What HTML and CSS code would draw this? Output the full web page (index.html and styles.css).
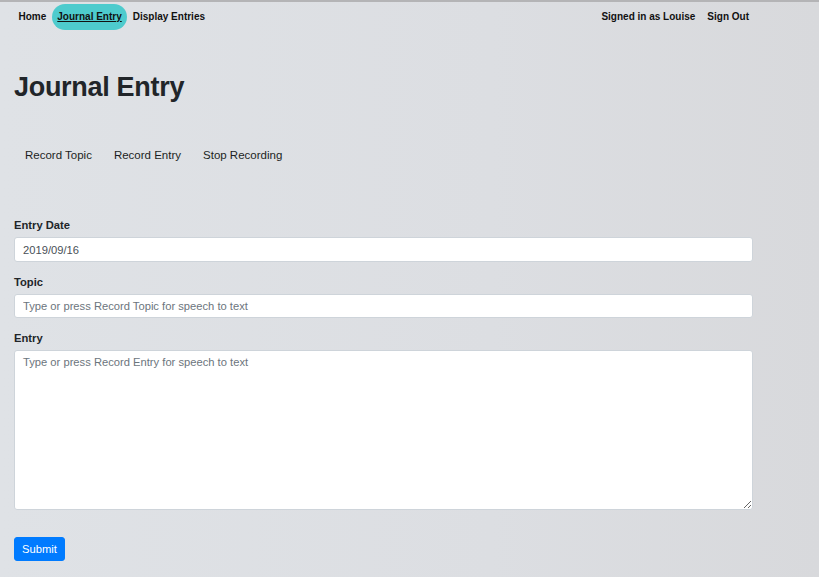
FILE: index.html
```html
<!DOCTYPE html>
<html lang="en">
<head>
<meta charset="utf-8">
<title>Journal Entry</title>
<link rel="stylesheet" href="styles.css">
</head>
<body>
<nav class="topnav">
  <div class="nav-left">
    <a class="nav-link" href="#">Home</a>
    <a class="nav-link active" href="#">Journal Entry</a>
    <a class="nav-link" href="#">Display Entries</a>
  </div>
  <div class="nav-right">
    <span class="nav-link">Signed in as Louise</span>
    <a class="nav-link" href="#">Sign Out</a>
  </div>
</nav>
<main class="page">
  <h1 class="title">Journal Entry</h1>
  <div class="record-row">
    <button class="rec-btn" type="button">Record Topic</button>
    <button class="rec-btn" type="button">Record Entry</button>
    <button class="rec-btn" type="button">Stop Recording</button>
  </div>
  <form class="entry-form">
    <div class="group">
      <label class="label" for="date">Entry Date</label>
      <input class="field" id="date" type="text" value="2019/09/16">
    </div>
    <div class="group">
      <label class="label" for="topic">Topic</label>
      <input class="field" id="topic" type="text" placeholder="Type or press Record Topic for speech to text">
    </div>
    <div class="group">
      <label class="label" for="entry">Entry</label>
      <textarea class="field area" id="entry" placeholder="Type or press Record Entry for speech to text"></textarea>
    </div>
    <button class="submit" type="submit">Submit</button>
  </form>
</main>
</body>
</html>
```
FILE: styles.css
```css
html, body {
  margin: 0;
  padding: 0;
}
body {
  min-height: 577px;
  box-sizing: border-box;
  border-top: 2px solid #b4b4b6;
  background: linear-gradient(to right, #dfe2e6 0%, #dcdee2 60%, #d8d9dc 100%);
  font-family: "Liberation Sans", Arial, sans-serif;
  color: #212529;
  font-size: 11.2px;
}
.topnav {
  display: flex;
  justify-content: space-between;
  align-items: center;
  height: 26px;
  margin-top: 2px;
  padding: 0 64px 0 13px;
}
.nav-left, .nav-right {
  display: flex;
  align-items: center;
}
.nav-link {
  font-size: 10px;
  font-weight: bold;
  color: #111;
  text-decoration: none;
  padding: 0 5.5px;
  line-height: 26px;
  border-radius: 13px;
}
.nav-right .nav-link {
  padding: 0 6px;
}
.nav-link.active {
  background: #4ecbcd;
  text-decoration: underline;
}
.page {
  padding: 0 66px 0 14px;
}
.title {
  margin: 40px 0 0;
  font-size: 27px;
  letter-spacing: -0.3px;
  font-weight: bold;
  line-height: 34px;
  color: #212529;
}
.record-row {
  display: flex;
  gap: 4px;
  margin-top: 38px;
  padding-left: 2px;
}
.rec-btn {
  font-family: "Liberation Sans", Arial, sans-serif;
  font-size: 11.5px;
  line-height: 17px;
  color: #1c1f23;
  background: transparent;
  border: 1px solid transparent;
  padding: 4px 8px;
  margin: 0;
}
.entry-form {
  margin-top: 48px;
}
.group {
  display: flex;
  flex-direction: column;
  margin-bottom: 11px;
}
.label {
  font-weight: bold;
  line-height: 17px;
  margin-bottom: 3px;
}
.group + .group .label {
  margin-top: 1px;
}
.field {
  box-sizing: border-box;
  height: 25px;
  margin: 0;
  padding: 4px 8px;
  border: 1px solid #ced4da;
  border-radius: 3px;
  background: #fff;
  font-family: "Liberation Sans", Arial, sans-serif;
  font-size: 11.2px;
  line-height: 15px;
  color: #495057;
}
.group + .group .field {
  height: 24px;
}
.group + .group .area {
  height: 160px;
}
.field::placeholder {
  color: #6c757d;
  opacity: 1;
}
.area {
  resize: vertical;
}
.submit {
  margin-top: 16px;
  font-family: "Liberation Sans", Arial, sans-serif;
  font-size: 11.2px;
  line-height: 16px;
  color: #fff;
  background: #007bff;
  border: 1px solid #007bff;
  border-radius: 3px;
  padding: 3px 7px;
}
```
